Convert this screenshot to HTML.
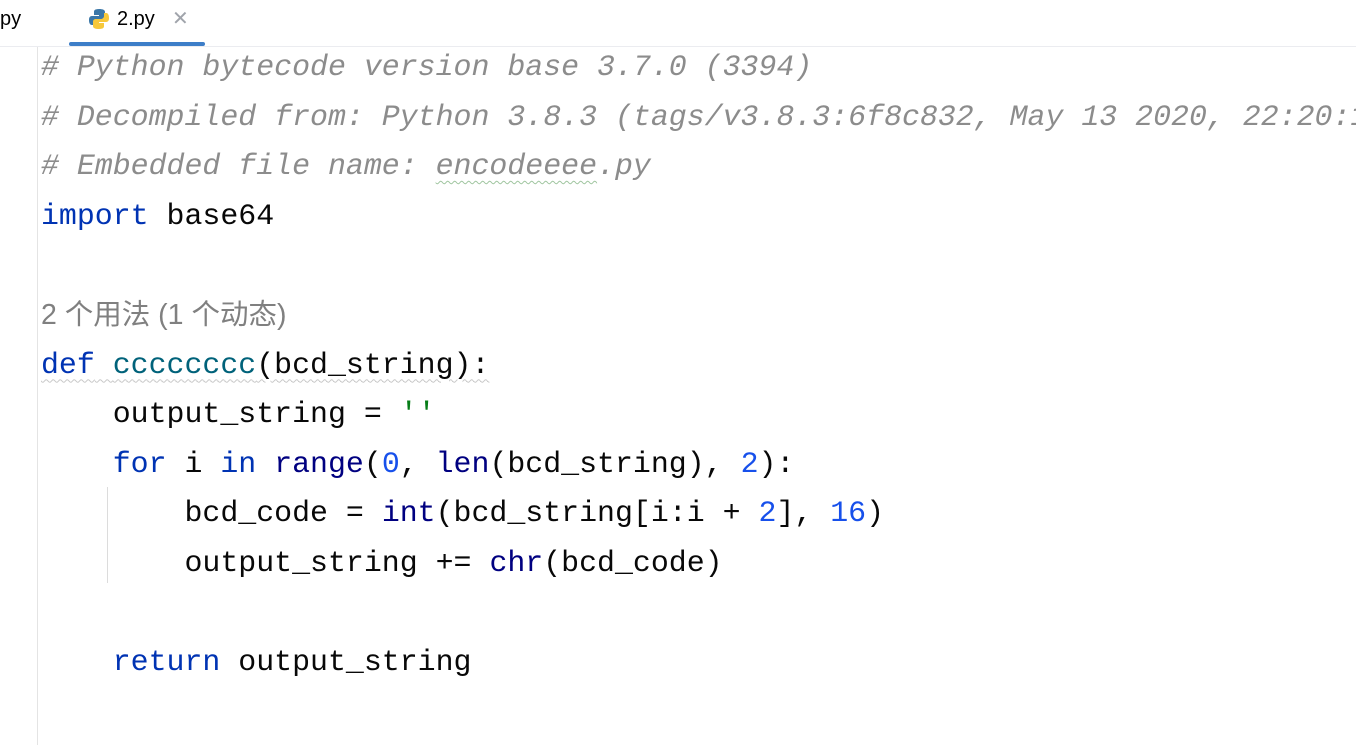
<html><head><style>
body{margin:0;width:1356px;height:745px;background:#fff;overflow:hidden;position:relative;font-family:"Liberation Mono",monospace}
.tabs{position:absolute;left:0;top:0;width:1356px;height:46px;border-bottom:1px solid #ebecf0;font-family:"Liberation Sans",sans-serif;font-size:20px;color:#000}
.gut{position:absolute;left:37px;top:47px;width:1px;height:698px;background:#e4e4e4}
.code{position:absolute;left:41px;top:43px;font-size:29.9px;line-height:49.6px;white-space:pre;color:#080808}
.c{color:#8c8c8c;font-style:italic}.k{color:#0033b3}.f{color:#00627a}.n{color:#1750eb}.s{color:#067d17}.b{color:#000080}
.h{color:#808080;font-family:"Liberation Sans","Noto Sans CJK SC",sans-serif;font-size:28.5px}
.w{text-decoration:underline wavy #9fc59f;text-underline-offset:6px;text-decoration-thickness:1px}
.wg{text-decoration:underline wavy #c8c8c8;text-underline-offset:6px;text-decoration-thickness:1px}
</style></head><body>
<div class="tabs">
<span style="position:absolute;left:0;top:8px">py</span>
<svg style="position:absolute;left:88px;top:8px" width="22" height="22" viewBox="0 0 22 22"><path d="M11 1C6 1 6 3 6 4v3h5v1H4C1 8 1 11 1 12s0 5 3 5h2v-3c0-2 2-3 3-3h5c2 0 3-1 3-3V4c0-2-2-3-6-3z" fill="#3b77a8"/><path d="M11 21c5 0 5-2 5-3v-3h-5v-1h7c3 0 3-3 3-4s0-5-3-5h-2v3c0 2-2 3-3 3H8c-2 0-3 1-3 3v4c0 2 2 3 6 3z" fill="#f7c83a"/></svg>
<span style="position:absolute;left:117px;top:8px">2.py</span>
<span style="position:absolute;left:172px;top:6px;color:#a0a4ab;font-size:20px">✕</span>
<div style="position:absolute;left:69px;top:42px;width:136px;height:4px;background:#3d7ec8;border-radius:2px"></div>
</div>
<div class="gut"></div>
<div style="position:absolute;left:107px;top:487px;width:1px;height:96px;background:#dcdcdc"></div>
<div class="code"><span class="c"># Python bytecode version base 3.7.0 (3394)</span>
<span class="c"># Decompiled from: Python 3.8.3 (tags/v3.8.3:6f8c832, May 13 2020, 22:20:19)</span>
<span class="c"># Embedded file name: <span class="w">encodeeee</span>.py</span>
<span class="k">import</span> base64

<span class="h">2 个用法 (1 个动态)</span>
<span class="wg"><span class="k">def</span> <span class="f">cccccccc</span>(bcd_string):</span>
    output_string = <span class="s">''</span>
    <span class="k">for</span> i <span class="k">in</span> <span class="b">range</span>(<span class="n">0</span>, <span class="b">len</span>(bcd_string), <span class="n">2</span>):
        bcd_code = <span class="b">int</span>(bcd_string[i:i + <span class="n">2</span>], <span class="n">16</span>)
        output_string += <span class="b">chr</span>(bcd_code)

    <span class="k">return</span> output_string</div>
</body></html>
